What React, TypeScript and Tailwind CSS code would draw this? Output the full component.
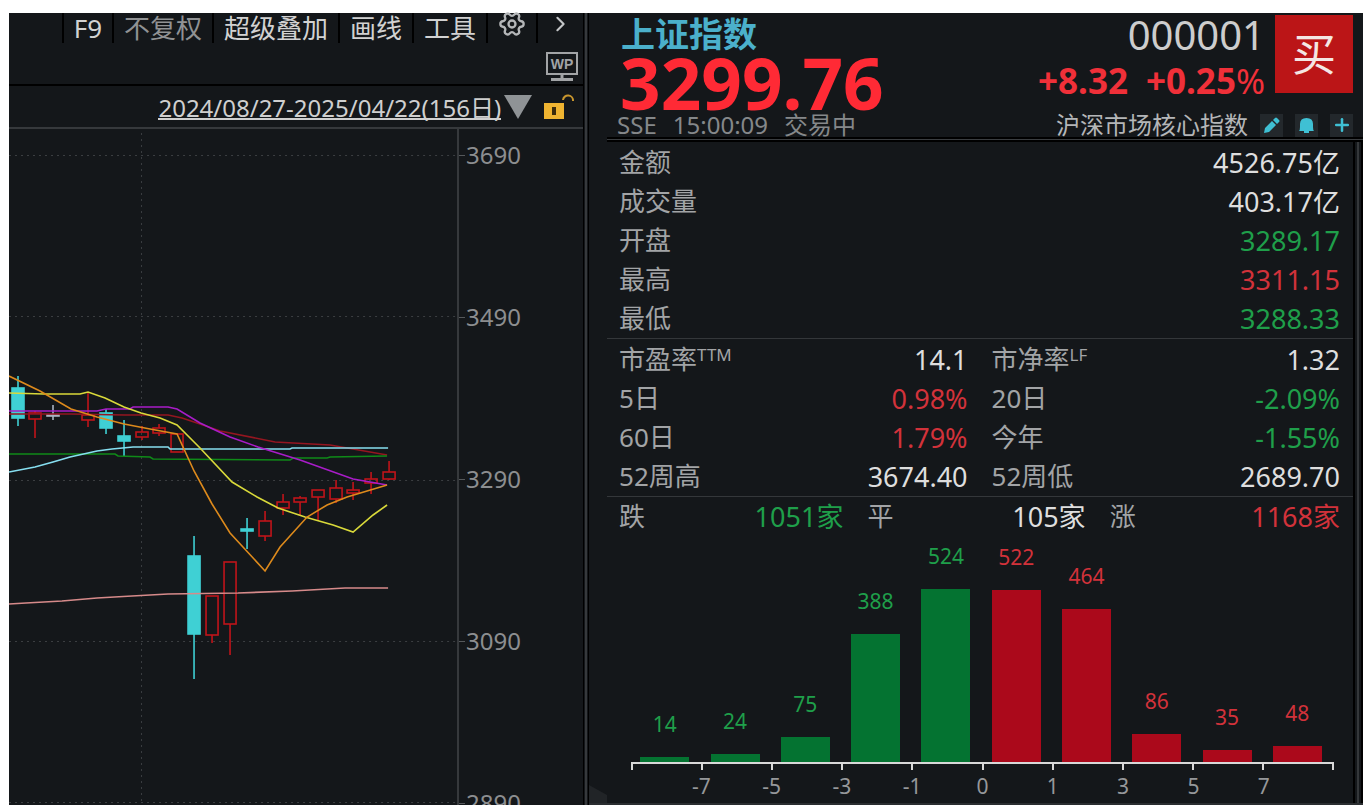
import React from "react";
import { ChevronRight, Plus, Settings } from "lucide-react";

const UP = "text-[#d2323a]";
const DOWN = "text-[#1f9f4a]";
const FLAT = "text-[#dedede]";

const summary = [
  { label: "金额", value: "4526.75亿", color: FLAT },
  { label: "成交量", value: "403.17亿", color: FLAT },
  { label: "开盘", value: "3289.17", color: DOWN },
  { label: "最高", value: "3311.15", color: UP },
  { label: "最低", value: "3288.33", color: DOWN },
];

const ratios = [
  { label: "市盈率", sup: "TTM", value: "14.1", color: FLAT },
  { label: "市净率", sup: "LF", value: "1.32", color: FLAT },
  { label: "5日", value: "0.98%", color: UP },
  { label: "20日", value: "-2.09%", color: DOWN },
  { label: "60日", value: "1.79%", color: UP },
  { label: "今年", value: "-1.55%", color: DOWN },
  { label: "52周高", value: "3674.40", color: FLAT },
  { label: "52周低", value: "2689.70", color: FLAT },
];

const breadth = [
  { label: "跌", value: "1051家", color: DOWN },
  { label: "平", value: "105家", color: FLAT },
  { label: "涨", value: "1168家", color: UP },
];

const buckets = [14, 24, 75, 388, 524, 522, 464, 86, 35, 48];
const bucketTicks = ["-7", "-5", "-3", "-1", "0", "1", "3", "5", "7"];

const priceLevels = [3690, 3490, 3290, 3090, 2890];

// x, high, body top, body bottom, low
type Candle = { x: number; h: number; t: number; b: number; l: number; kind: "down" | "up" | "flat" };

const candles: Candle[] = [
  { x: 18, h: 376, t: 388, b: 418, l: 426, kind: "down" },
  { x: 35, h: 411, t: 413, b: 419, l: 438, kind: "up" },
  { x: 53, h: 405, t: 415, b: 416, l: 420, kind: "flat" },
  { x: 88, h: 393, t: 415, b: 420, l: 427, kind: "up" },
  { x: 106, h: 409, t: 413, b: 428, l: 434, kind: "down" },
  { x: 124, h: 420, t: 436, b: 441, l: 456, kind: "down" },
  { x: 142, h: 426, t: 432, b: 437, l: 440, kind: "up" },
  { x: 159, h: 424, t: 428, b: 433, l: 436, kind: "up" },
  { x: 177, h: 434, t: 434, b: 452, l: 452, kind: "up" },
  { x: 194, h: 536, t: 556, b: 634, l: 679, kind: "down" },
  { x: 212, h: 596, t: 596, b: 635, l: 643, kind: "up" },
  { x: 230, h: 562, t: 562, b: 624, l: 655, kind: "up" },
  { x: 247, h: 518, t: 529, b: 531, l: 549, kind: "down" },
  { x: 265, h: 511, t: 521, b: 536, l: 541, kind: "up" },
  { x: 283, h: 494, t: 502, b: 508, l: 515, kind: "up" },
  { x: 300, h: 496, t: 498, b: 502, l: 515, kind: "up" },
  { x: 318, h: 490, t: 490, b: 497, l: 521, kind: "up" },
  { x: 336, h: 480, t: 488, b: 499, l: 503, kind: "up" },
  { x: 353, h: 482, t: 490, b: 493, l: 500, kind: "up" },
  { x: 371, h: 472, t: 479, b: 483, l: 494, kind: "up" },
  { x: 389, h: 461, t: 472, b: 479, l: 480, kind: "up" },
];

const averages = [
  { stroke: "#941620", points: "9,414 71,414 124,415 168,415 182,418 200,424 220,431 275,442 330,445 353,449 387,455" },
  { stroke: "#0f8a18", points: "9,454 115,454 118,456 150,457 153,459 290,460 293,458 327,458 330,457 387,456" },
  { stroke: "#86dff0", points: "9,472 35,467 53,462 70,457 97,451 112,449 133,447 168,447 170,449 290,449 292,448 388,448" },
  { stroke: "#a81cc8", points: "9,411 97,411 106,409 130,409 133,407 168,407 177,409 200,423 230,437 258,447 300,460 353,479 387,485" },
  { stroke: "#d9d93a", points: "9,393 44,394 80,394 88,392 105,398 124,407 141,413 160,418 177,425 200,448 232,482 257,497 278,508 305,517 333,525 353,532 373,515 387,505" },
  { stroke: "#dd8a1c", points: "9,376 40,391 71,409 97,417 124,424 150,429 177,434 194,471 212,504 230,533 265,571 280,547 307,517 327,505 347,497 387,485" },
  { stroke: "#d68a8a", points: "9,604 26,603 62,601 97,598 132,596 168,594 238,593 292,591 345,588 388,588" },
];

const candleColor = { down: "#3fd0d4", up: "#c0141a", flat: "#a9b4c4" };

function Toolbar() {
  const item = "flex h-[30px] items-center border-l-2 border-black px-[10px] text-[26px] leading-[28px]";
  return (
    <div className="flex justify-end text-[#d2d2d2]">
      <button className={item}>F9</button>
      <button className={`${item} text-[#909294]`}>不复权</button>
      <button className={item}>超级叠加</button>
      <button className={item}>画线</button>
      <button className={item}>工具</button>
      <button className={`${item} pb-2`} aria-label="设置">
        <Settings className="h-7 w-7 rotate-90 text-[#b4b6b8]" strokeWidth={2} />
      </button>
      <button className={`${item} pb-2`} aria-label="更多">
        <ChevronRight className="h-7 w-[25px] text-[#c4c6c8]" strokeWidth={2} />
      </button>
    </div>
  );
}

function KLineChart() {
  return (
    <div className="flex h-[676px] overflow-hidden">
      <svg className="h-full min-w-0 flex-1" viewBox="9 129 448 676" preserveAspectRatio="none" role="img" aria-label="K线图">
        <g stroke="#3b3e41" strokeDasharray="2 4">
          {[155, 316, 480, 641, 802].map((y) => (
            <line key={y} x1="9" x2="457" y1={y + 0.5} y2={y + 0.5} />
          ))}
          <line x1="141.5" x2="141.5" y1="133" y2="805" />
        </g>
        {candles.map((c) => (
          <g key={c.x} stroke={candleColor[c.kind]} strokeWidth="1.6" fill="none">
            <line x1={c.x} x2={c.x} y1={c.h} y2={c.t} />
            <line x1={c.x} x2={c.x} y1={c.b} y2={c.l} />
            <rect
              x={c.x - 6}
              y={c.t}
              width="12"
              height={c.b - c.t}
              fill={c.kind === "down" ? candleColor.down : "none"}
            />
          </g>
        ))}
        {averages.map((a) => (
          <polyline key={a.stroke} points={a.points} fill="none" stroke={a.stroke} strokeWidth="1.6" />
        ))}
      </svg>
      <ul className="w-[126px] border-l-2 border-[#36393c] pt-[11px] text-[24px] leading-[30px] text-[#8c8e90]">
        {priceLevels.map((p) => (
          <li key={p} className="mb-[132px] flex h-[30px] items-center gap-px">
            <span className="h-px w-[6px] bg-[#55585b]" />
            {p}
          </li>
        ))}
      </ul>
    </div>
  );
}

function ChartPanel() {
  return (
    <section className="w-[42.4%] shrink-0">
      <Toolbar />
      <div className="flex h-[43px] items-center justify-end border-b-2 border-black pt-1 pr-[5px]">
        <button aria-label="WP">
          <svg width="32" height="30" viewBox="0 0 32 30">
            <rect x="1" y="2" width="30" height="21" fill="none" stroke="#a2a4a6" strokeWidth="2" />
            <path d="M16 23v5M5 28.5h22" stroke="#a2a4a6" strokeWidth="3" />
            <text x="16" y="18" textAnchor="middle" fontFamily="Liberation Sans" fontWeight="bold" fontSize="14" fill="#a2a4a6">
              WP
            </text>
          </svg>
        </button>
      </div>
      <div className="flex h-[43px] items-center justify-end border-b-2 border-[#36393c] pr-[9px]">
        <button className="flex items-center gap-[3px] text-[24px] leading-[20px] text-[#cfcfcf]">
          <span className="border-b-2 border-[#cfcfcf] pt-1">2024/08/27-2025/04/22(156日)</span>
          <svg width="28" height="24" viewBox="0 0 28 24">
            <path d="M0 0h28L14 24z" fill="#8f9396" />
          </svg>
        </button>
        <button className="ml-[12px]" aria-label="解锁">
          <svg width="30" height="26" viewBox="0 0 30 26">
            <path d="M19 6a5 5 0 0 1 10 1" fill="none" stroke="#c8962e" strokeWidth="2" />
            <rect x="0" y="9" width="20" height="16" fill="#efb431" />
            <path d="M10 13v8" stroke="#3c2c0c" strokeWidth="4" />
          </svg>
        </button>
      </div>
      <KLineChart />
    </section>
  );
}

function QuoteHeader() {
  const tool = "flex h-[23px] w-[23px] items-center justify-center bg-[#23282c] text-[#3fc0d4]";
  return (
    <header className="flex h-[124px] justify-between pr-[10px] pl-[10px]">
      <div>
        <h1 className="pl-1 text-[34px] leading-[42px] font-bold text-[#4bb0cb]">上证指数</h1>
        <p className="pl-[3px] text-[71px] leading-[55px] font-bold text-[#ff2a35]">3299.76</p>
        <p className="flex gap-4 text-[24px] leading-[30px] text-[#85888a]">
          <span>SSE</span>
          <span>15:00:09</span>
          <span>交易中</span>
        </p>
      </div>
      <div className="flex flex-col items-end">
        <div className="flex gap-[10px]">
          <div className="text-right">
            <p className="text-[40px] leading-[44px] text-[#cdcdcd]">000001</p>
            <p className="flex justify-end gap-[18px] text-[35px] leading-[48px] font-bold text-[#f03039]">
              <span>+8.32</span>
              <span>
                +0.25<span className="font-normal">%</span>
              </span>
            </p>
          </div>
          <button className="mt-[2px] h-[78px] w-[78px] bg-[#bb1517] text-[44px] leading-[78px] text-[#f4e6e4]">买</button>
        </div>
        <div className="mt-[7px] flex items-center gap-[12px]">
          <a href="#" className="text-[24px] leading-[26px] text-[#b4b6b8]">
            沪深市场核心指数
          </a>
          <button className={tool} aria-label="编辑">
            <svg width="17" height="17" viewBox="0 0 17 17" fill="currentColor">
              <path d="M1 16l1-5 7-7 4 4-7 7zM10 3l2-2q1-1 2 0l2 2q1 1 0 2l-2 2z" />
            </svg>
          </button>
          <button className={tool} aria-label="提醒">
            <svg width="17" height="17" viewBox="0 0 17 17" fill="currentColor">
              <path d="M1 14q1-1 1-4V7q0-6 6.500-6T15 7v3q0 3 1 4zM6 14h5v2H6z" />
            </svg>
          </button>
          <button className={tool} aria-label="添加">
            <Plus className="h-5 w-5" strokeWidth={3} />
          </button>
        </div>
      </div>
    </header>
  );
}

function Stat({ label, sup, value, color }: { label: string; sup?: string; value: string; color: string }) {
  return (
    <div className="flex h-[39px] items-center justify-between leading-[39px]">
      <dt className="flex text-[26px] text-[#a2a4a6]">
        {label}
        {sup && <span className="text-[17px] leading-[30px]">{sup}</span>}
      </dt>
      <dd className={`text-[27px] ${color}`}>{value}</dd>
    </div>
  );
}

function Histogram() {
  return (
    <div className="mr-[19px] ml-[24px]">
      <div className="grid h-[226px] grid-cols-10 text-[21px]">
        {buckets.map((n, i) => (
          <div key={i} className="flex flex-col items-center justify-end pr-[3px]">
            <span className={`mb-[21px] leading-[24px] ${i < 5 ? DOWN : UP}`}>{n}</span>
            <div className={`w-[49px] ${i < 5 ? "bg-[#047331]" : "bg-[#ab091b]"}`} style={{ height: Math.round(n * 0.33) }} />
          </div>
        ))}
      </div>
      <div className="grid h-[8px] grid-cols-10 border-t-2 border-r-2 border-[#d8d8d8]">
        {buckets.map((_, i) => (
          <span key={i} className="border-l-2 border-[#d8d8d8]" />
        ))}
      </div>
      <div className="grid grid-cols-9 px-[5%] pt-[2px] text-center text-[21px] leading-[28px] text-[#96989a]">
        {bucketTicks.map((t) => (
          <span key={t}>{t}</span>
        ))}
      </div>
    </div>
  );
}

function QuotePanel() {
  return (
    <section className="relative flex min-w-0 flex-1 flex-col border-b-2 border-[#2a2d30] pl-[18px]">
      <QuoteHeader />
      <div className="h-[5px] border-y-2 border-black bg-[#3a3d40]" />
      <div className="flex flex-1">
        <div className="min-w-0 flex-1">
          <dl className="border-b border-[#34373a] pt-px pr-[13px] pl-[12px]">
            {summary.map((s) => (
              <Stat key={s.label} {...s} />
            ))}
          </dl>
          <dl className="grid grid-cols-2 gap-x-6 border-b border-[#34373a] pt-px pr-[13px] pl-[12px]">
            {ratios.map((s) => (
              <Stat key={s.label} {...s} />
            ))}
          </dl>
          <dl className="grid grid-cols-[37fr_36fr_38fr] gap-x-6 pr-[13px] pl-[12px]">
            {breadth.map((s) => (
              <Stat key={s.label} {...s} />
            ))}
          </dl>
          <Histogram />
        </div>
        {/* scroll track */}
        <div className="flex w-[10px] justify-between bg-[#14171a]">
          <span className="w-[2px] bg-black" />
          <span className="w-[2px] bg-[#34373a]" />
          <span className="w-[2px] bg-black" />
        </div>
      </div>
      {/* resize corner */}
      <svg className="absolute bottom-0 left-0" width="18" height="18" viewBox="0 0 18 18">
        <path d="M0 0l18 10v8H0z" fill="#212427" />
      </svg>
    </section>
  );
}

export default function App() {
  return (
    <div className="min-h-screen bg-white pt-[13px] pr-[7px] pb-[7px] pl-[9px] font-['Noto_Sans','Noto_Sans_CJK_SC',sans-serif]">
      <main className="flex bg-[#14171a]">
        <ChartPanel />
        <div className="flex w-[6px] justify-between bg-[#14171a]">
          <span className="w-px bg-black" />
          <span className="w-[2px] bg-[#36393c]" />
          <span className="w-px bg-black" />
        </div>
        <QuotePanel />
      </main>
    </div>
  );
}
